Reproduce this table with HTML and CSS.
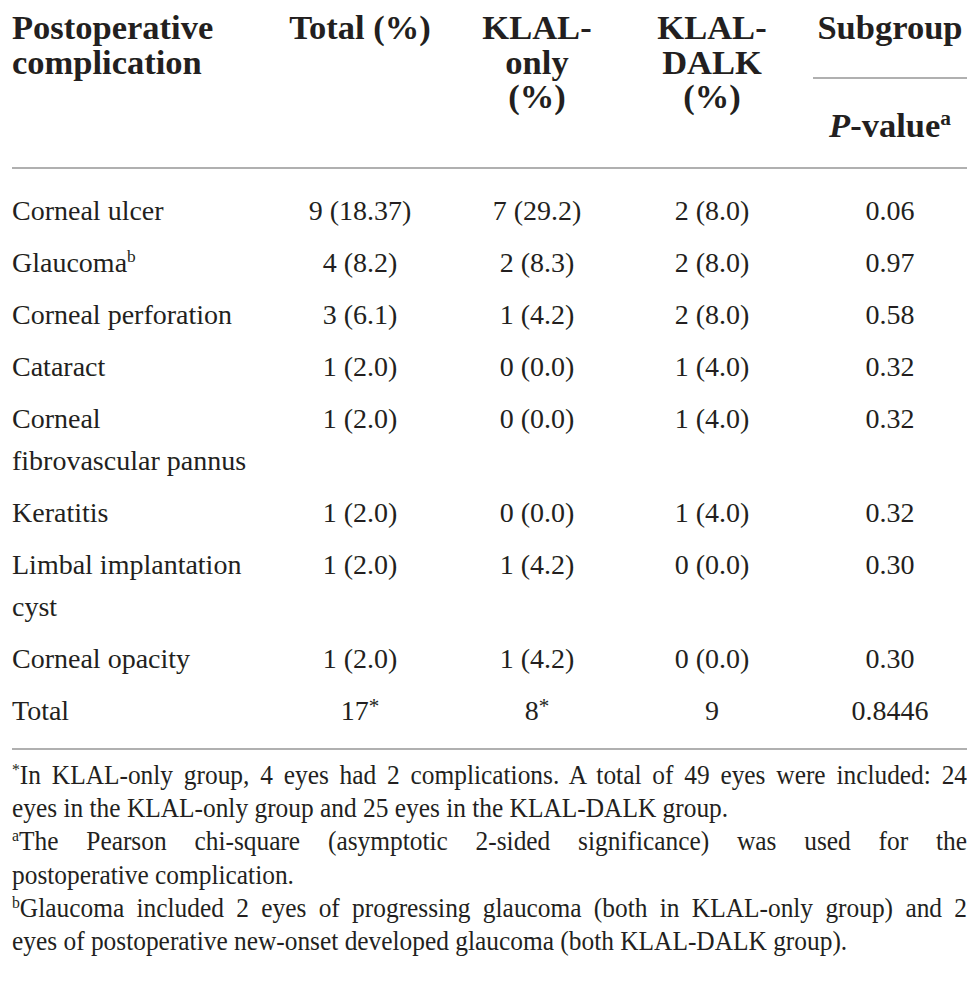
FILE: index.html
```html
<!DOCTYPE html>
<html lang="en">
<head>
<meta charset="utf-8">
<title>Postoperative complications</title>
<link rel="stylesheet" href="styles.css">
</head>
<body>
<div class="page">
  <table class="data">
    <colgroup>
      <col class="c1"><col class="c2"><col class="c3"><col class="c4"><col class="c5">
    </colgroup>
    <thead>
      <tr>
        <th class="left">Postoperative complication</th>
        <th>Total (%)</th>
        <th>KLAL-<br>only<br>(%)</th>
        <th>KLAL-<br>DALK<br>(%)</th>
        <th class="sub">
          <div class="sub-title">Subgroup</div>
          <div class="sub-p"><i>P</i>-value<span class="sup">a</span></div>
        </th>
      </tr>
    </thead>
    <tbody>
      <tr><td class="left">Corneal ulcer</td><td>9 (18.37)</td><td>7 (29.2)</td><td>2 (8.0)</td><td class="pv">0.06</td></tr>
      <tr><td class="left">Glaucoma<span class="sup">b</span></td><td>4 (8.2)</td><td>2 (8.3)</td><td>2 (8.0)</td><td class="pv">0.97</td></tr>
      <tr><td class="left">Corneal perforation</td><td>3 (6.1)</td><td>1 (4.2)</td><td>2 (8.0)</td><td class="pv">0.58</td></tr>
      <tr><td class="left">Cataract</td><td>1 (2.0)</td><td>0 (0.0)</td><td>1 (4.0)</td><td class="pv">0.32</td></tr>
      <tr><td class="left">Corneal<br>fibrovascular pannus</td><td>1 (2.0)</td><td>0 (0.0)</td><td>1 (4.0)</td><td class="pv">0.32</td></tr>
      <tr><td class="left">Keratitis</td><td>1 (2.0)</td><td>0 (0.0)</td><td>1 (4.0)</td><td class="pv">0.32</td></tr>
      <tr><td class="left">Limbal implantation<br>cyst</td><td>1 (2.0)</td><td>1 (4.2)</td><td>0 (0.0)</td><td class="pv">0.30</td></tr>
      <tr><td class="left">Corneal opacity</td><td>1 (2.0)</td><td>1 (4.2)</td><td>0 (0.0)</td><td class="pv">0.30</td></tr>
      <tr><td class="left">Total</td><td>17<span class="ast">*</span></td><td>8<span class="ast">*</span></td><td>9</td><td class="pv">0.8446</td></tr>
    </tbody>
  </table>
  <div class="notes-clip">
    <div class="notes">
      <p>
        <span class="line full"><span class="sup">*</span>In KLAL-only group, 4 eyes had 2 complications. A total of 49 eyes were included: 24</span>
        <span class="line">eyes in the KLAL-only group and 25 eyes in the KLAL-DALK group.</span>
      </p>
      <p>
        <span class="line full"><span class="sup">a</span>The Pearson chi-square (asymptotic 2-sided significance) was used for the</span>
        <span class="line">postoperative complication.</span>
      </p>
      <p>
        <span class="line full"><span class="sup">b</span>Glaucoma included 2 eyes of progressing glaucoma (both in KLAL-only group) and 2</span>
        <span class="line">eyes of postoperative new-onset developed glaucoma (both KLAL-DALK group).</span>
      </p>
    </div>
  </div>
</div>
</body>
</html>
```

FILE: styles.css
```css
html, body {
  margin: 0;
  padding: 0;
  background: #ffffff;
}

.page {
  padding: 10px 12px 0 12px;
  color: #231f20;
  font-family: "Liberation Serif", "Times New Roman", serif;
}

.data {
  width: 955px;
  table-layout: fixed;
  border-collapse: collapse;
}

.c1 { width: 268px; }
.c2 { width: 160px; }
.c3 { width: 194px; }
.c4 { width: 156px; }
.c5 { width: 177px; }

.data th {
  font-weight: bold;
  font-size: 34.5px;
  line-height: 34.5px;
  text-align: center;
  vertical-align: top;
  padding: 0 0 53px 0;
  border-bottom: 2px solid #b0b0b0;
}

.data th.left,
.data td.left {
  text-align: left;
}

.data th.sub {
  padding-left: 23px;
  padding-bottom: 25px;
}

.sub-title {
  padding-bottom: 32px;
  border-bottom: 2px solid #b0b0b0;
}

.sub-p {
  margin-top: 29px;
}

.data td {
  font-size: 28px;
  line-height: 42px;
  text-align: center;
  vertical-align: top;
  padding: 5px 0;
}

.data td.pv {
  padding-left: 23px;
}

.data tbody tr:first-child td {
  padding-top: 21px;
}

.data tbody tr:last-child td {
  padding-bottom: 16px;
  border-bottom: 2px solid #b0b0b0;
}

.sup {
  font-size: 0.62em;
  line-height: 0;
  vertical-align: 0.55em;
}

.ast {
  font-size: 0.75em;
  line-height: 0;
  vertical-align: 0.35em;
}

.notes-clip {
  width: 955px;
  overflow: hidden;
  padding-top: 9px;
}

.notes {
  width: 1016px;
  transform: scaleX(0.94);
  transform-origin: 0 0;
}

.notes p {
  margin: 0;
  font-size: 27px;
  line-height: 33.2px;
}

.line {
  display: block;
  text-align: left;
}

.line.full {
  text-align: justify;
  text-align-last: justify;
}
```
